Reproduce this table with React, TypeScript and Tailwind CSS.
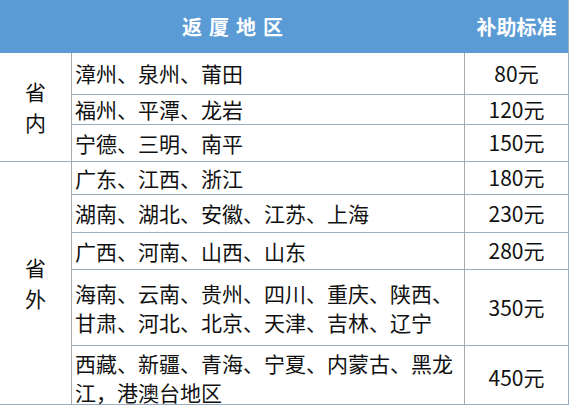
const rowLine = 'border-[#98adc2]';
const colLine = 'border-[#a9a9a9]';

type Row = { h: string; lines: string[]; price: string; last?: boolean; pad?: string };

const inner: Row[] = [
  { h: 'h-[42px]', lines: ['漳州、泉州、莆田'], price: '80元' },
  { h: 'h-[30px]', lines: ['福州、平潭、龙岩'], price: '120元' },
  { h: 'h-[36px]', lines: ['宁德、三明、南平'], price: '150元', last: true },
];

const outer: Row[] = [
  { h: 'h-[33px]', lines: ['广东、江西、浙江'], price: '180元' },
  { h: 'h-[38px]', lines: ['湖南、湖北、安徽、江苏、上海'], price: '230元' },
  { h: 'h-[37px]', lines: ['广西、河南、山西、山东'], price: '280元' },
  {
    h: 'h-[76px]',
    lines: ['海南、云南、贵州、四川、重庆、陕西、', '甘肃、河北、北京、天津、吉林、辽宁'],
    price: '350元',
  },
  {
    h: 'h-[58px]',
    lines: ['西藏、新疆、青海、宁夏、内蒙古、黑龙', '江，港澳台地区'],
    price: '450元',
    last: true,
    pad: 'pt-[5px]',
  },
];

function TableRow({ row }: { row: Row }) {
  return (
    <div className={`flex ${row.h} ${row.last ? '' : `border-b ${rowLine}`}`}>
      <div className={`w-[393px] shrink-0 flex flex-col justify-center pl-[3px] border-r ${colLine} ${row.pad ?? ''}`}>
        {row.lines.map((l) => (
          <span key={l} className="whitespace-nowrap leading-[29px]">{l}</span>
        ))}
      </div>
      <div className={`flex-1 flex items-center justify-center ${row.pad ?? ''}`}>{row.price}</div>
    </div>
  );
}

function Group({ label, rows }: { label: string[]; rows: Row[] }) {
  return (
    <div className={`flex border-b ${rowLine}`}>
      <div className={`w-[72px] shrink-0 flex flex-col items-center justify-center border-r ${colLine}`}>
        {label.map((c) => (
          <span key={c} className="leading-[31px]">{c}</span>
        ))}
      </div>
      <div className="flex-1 flex flex-col">
        {rows.map((r) => (
          <TableRow key={r.price} row={r} />
        ))}
      </div>
    </div>
  );
}

export default function App() {
  return (
    <div
      className="w-[571px] h-[407px] bg-white text-[21px] text-[#111]"
      style={{ fontFamily: '"Noto Sans CJK SC", "Noto Sans", sans-serif' }}
    >
      <div className={`w-[569px] border-r ${rowLine}`}>
        <div className="flex h-[53px] bg-[#5b9bd5] text-white font-bold text-[20px]">
          <div className="w-[465px] flex items-center justify-center tracking-[7px] pl-[7px]">返厦地区</div>
          <div className="flex-1 flex items-center justify-center">补助标准</div>
        </div>
        <Group label={['省', '内']} rows={inner} />
        <Group label={['省', '外']} rows={outer} />
      </div>
    </div>
  );
}
